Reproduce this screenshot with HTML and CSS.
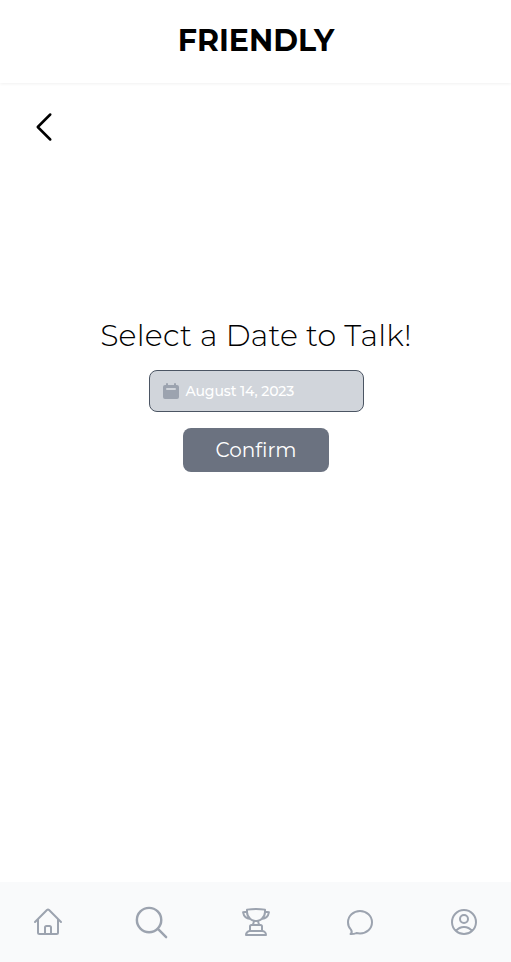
FILE: index.html
```html
<!DOCTYPE html>
<html lang="en">
<head>
    <meta charset="UTF-8">
    <meta name="viewport" content="width=device-width, initial-scale=1.0">
    <title>Friendly</title>
    <link rel="stylesheet" href="styles.css">
</head>
<body>
    <header class="header">
        <h1>FRIENDLY</h1>
    </header>
    <main class="content">
        <a href="#" class="back" aria-label="Back">
            <svg viewBox="0 0 24 24"><path d="M15.75 19.5L8.25 12l7.5-7.5"/></svg>
        </a>
        <form class="date-form">
            <h2>Select a Date to Talk!</h2>
            <div class="date-input">
                <svg viewBox="0 0 16 16">
                    <path fill-rule="evenodd" d="M3 1a1 1 0 0 1 2 0v1h6V1a1 1 0 0 1 2 0v1h1a2 2 0 0 1 2 2v10a2 2 0 0 1-2 2H2a2 2 0 0 1-2-2V4a2 2 0 0 1 2-2h1V1zm1 4a1 1 0 0 0 0 2h8a1 1 0 0 0 0-2H4z"/>
                </svg>
                <span>August 14, 2023</span>
            </div>
            <button type="button" class="confirm">Confirm</button>
        </form>
    </main>
    <nav class="nav">
        <a href="#" aria-label="Home">
            <svg viewBox="0 0 24 24"><path d="M2.25 12l8.954-8.955c.44-.439 1.152-.439 1.591 0L21.75 12M4.5 9.75v10.125c0 .621.504 1.125 1.125 1.125H9.75v-4.875c0-.621.504-1.125 1.125-1.125h2.25c.621 0 1.125.504 1.125 1.125V21h4.125c.621 0 1.125-.504 1.125-1.125V9.75M8.25 21h8.25"/></svg>
        </a>
        <a href="#" aria-label="Search">
            <svg class="search" viewBox="0 0 24 24"><path d="M21 21l-5.197-5.197m0 0A7.5 7.5 0 105.196 5.196a7.5 7.5 0 0010.607 10.607z"/></svg>
        </a>
        <a href="#" aria-label="Awards">
            <svg viewBox="0 0 24 24"><path d="M16.5 18.75h-9m9 0a3 3 0 013 3h-15a3 3 0 013-3m9 0v-3.375c0-.621-.503-1.125-1.125-1.125h-.871M7.5 18.75v-3.375c0-.621.504-1.125 1.125-1.125h.872m5.007 0H9.497m5.007 0a7.454 7.454 0 01-.982-3.172M9.497 14.25a7.454 7.454 0 00.981-3.172M5.25 4.236c-.982.143-1.954.317-2.916.52A6.003 6.003 0 007.73 9.728M5.25 4.236V4.5c0 2.108.966 3.99 2.48 5.228M5.25 4.236V2.721C7.456 2.41 9.71 2.25 12 2.25c2.291 0 4.545.16 6.75.47v1.516M7.73 9.728a6.726 6.726 0 002.748 1.35m8.272-6.842V4.5c0 2.108-.966 3.99-2.48 5.228m2.48-5.492a46.32 46.32 0 012.916.52 6.003 6.003 0 01-5.395 4.972m0 0a6.726 6.726 0 01-2.749 1.35m0 0a6.772 6.772 0 01-3.044 0"/></svg>
        </a>
        <a href="#" aria-label="Chat">
            <svg viewBox="0 0 24 24"><path d="M4.9 21c1-.8 1.2-2 .3-3.3C3.7 16.2 3 14.2 3 12.200 3 7.400 7 3.700 12 3.700s9 3.700 9 8.500-4 8.400-9 8.400c-1 0-1.900-.1-2.700-.3-1.300.5-2.600.8-4.400.7z"/></svg>
        </a>
        <a href="#" aria-label="Profile">
            <svg viewBox="0 0 24 24"><path d="M17.982 18.725A7.488 7.488 0 0012 15.75a7.488 7.488 0 00-5.982 2.975m11.963 0a9 9 0 10-11.963 0m11.963 0A8.966 8.966 0 0112 21a8.966 8.966 0 01-5.982-2.275M15 9.75a3 3 0 11-6 0 3 3 0 016 0z"/></svg>
        </a>
    </nav>
</body>
</html>
```
FILE: styles.css
```css
body {
    font-family: Montserrat, Inter, sans-serif;
    margin: 0;
    height: 100vh;
    display: flex;
    flex-direction: column;
    background: white;
    color: black;
}
.header {
    height: 83px;
    display: flex;
    align-items: center;
    justify-content: center;
    box-shadow: 0 1px 3px rgba(0, 0, 0, 0.06);
}
.header h1 {
    margin: 0 0 1px 1px;
    font-size: 30px;
    font-weight: 700;
    line-height: 36px;
}
.content {
    flex: 1;
    display: flex;
    flex-direction: column;
}
svg {
    display: block;
    width: 32px;
    height: 32px;
    fill: none;
    stroke: currentColor;
    stroke-width: 1.5;
    stroke-linecap: round;
    stroke-linejoin: round;
}
.back {
    margin: 24px 0 0 24px;
    width: 40px;
    color: black;
}
.back svg {
    width: 40px;
    height: 40px;
}
.date-form {
    margin-top: 171px;
    display: flex;
    flex-direction: column;
    align-items: center;
}
.date-form h2 {
    margin: 0 0 0 1px;
    font-size: 30px;
    font-weight: 300;
    line-height: 36px;
    letter-spacing: 0.22px;
}
.date-input {
    margin: 16px 0 16px 2px;
    width: 215px;
    height: 42px;
    box-sizing: border-box;
    padding: 0 13px;
    display: flex;
    align-items: center;
    gap: 6.5px;
    border: 1px solid #4b5563;
    border-radius: 8px;
    background: #d1d5db;
    color: white;
    font-size: 14px;
    font-weight: 500;
    letter-spacing: -0.12px;
}
.date-input svg {
    width: 16px;
    height: 16px;
    fill: #9ca3af;
    stroke: none;
}
.confirm {
    width: 146px;
    height: 44px;
    padding: 0 0 0 1px;
    border: 0;
    border-radius: 8px;
    background: #6b7280;
    color: white;
    font-family: inherit;
    font-size: 20px;
}
.nav {
    height: 80px;
    box-sizing: border-box;
    padding: 0 27px 0 28px;
    display: flex;
    align-items: center;
    justify-content: space-between;
    background: #f9fafb;
}
.nav a {
    width: 40px;
    display: flex;
    justify-content: center;
    color: #9ca3af;
}
.nav .search {
    width: 39px;
    height: 39px;
    margin-right: 1px;
}
```
